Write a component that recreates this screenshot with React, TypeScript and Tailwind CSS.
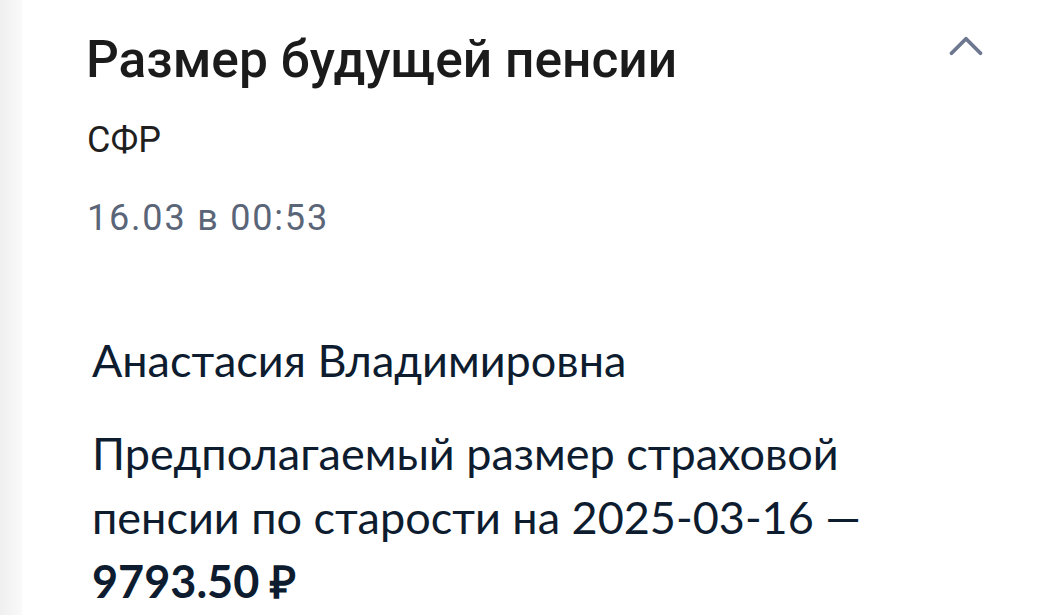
import { ChevronUp } from "lucide-react";

export default function App() {
  return (
    <div className="flex h-[615px] w-[1057px] overflow-hidden bg-white">
      {/* left shadow of the card edge */}
      <div className="w-[22px] shrink-0 bg-gradient-to-r from-[#efefef] to-[#fafafa]" />
      <div className="flex flex-1 flex-col pl-[64px] pr-[62px]">
        <div className="flex items-start justify-between pt-[17px]">
          <h1 className="mt-[13px] font-['Roboto',sans-serif] text-[51.5px] font-medium leading-[60px] text-[#1b1b1b]">
            Размер будущей пенсии
          </h1>
          <ChevronUp className="h-[58px] w-[58px] text-[#6e7790]" strokeWidth={1.6} />
        </div>
        <div className="mt-[28px] pl-[1px] font-['Roboto',sans-serif] text-[36px] leading-[44px] text-[#1f1f1f]">
          СФР
        </div>
        <div className="mt-[34px] pl-[1px] font-['Roboto',sans-serif] text-[36px] leading-[44px] tracking-[1.8px] text-[#5b6578]">
          16.03 в 00:53
        </div>
        <div className="mt-[88px] max-w-[800px] pl-[6px] font-['Lato',sans-serif] text-[45px] leading-[64px] text-[#0e1c2f]">
          <p>Анастасия Владимировна</p>
          <p className="mt-[29px]">
            Предполагаемый размер страховой пенсии по старости на 2025-03-16 —{" "}
            <span className="font-bold">9793.50 ₽</span>
          </p>
        </div>
      </div>
    </div>
  );
}
